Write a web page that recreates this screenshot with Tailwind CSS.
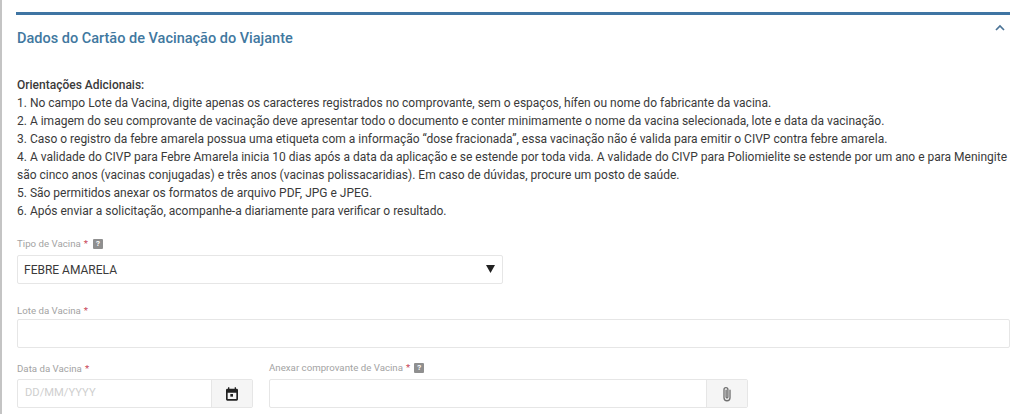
<!DOCTYPE html>
<html lang="en">
<head>
    <meta charset="UTF-8">
    <title>Dados do Cartão de Vacinação do Viajante</title>
    <script src="https://cdn.jsdelivr.net/npm/@tailwindcss/browser@4"></script>
</head>
<body class="bg-white h-[414px] overflow-hidden font-['Roboto',sans-serif] border-l-2 border-[#c4c4c4]">

    <div class="ml-[14px] w-[994px] pt-3">
        <!-- Section header -->
        <div class="border-t-[3px] border-[#3f75a3] flex justify-between h-[64px] pl-px">
            <h2 class="pt-[14px] text-[14.5px] leading-[20px] font-medium text-[#41789f]">Dados do Cartão de Vacinação do Viajante</h2>
            <svg class="mt-[7px] mr-[4px] w-[12px] h-[12px]" viewBox="0 0 12 12" fill="none" stroke="#4b7396" stroke-width="1.7"><path d="M2 8l4-4 4 4"/></svg>
        </div>

        <div class="pl-px">
            <!-- Instructions -->
            <div class="text-[12px] leading-[18px] text-[#3a3a3a]">
                <p class="font-medium">Orientações Adicionais:</p>
                <p>1. No campo Lote da Vacina, digite apenas os caracteres registrados no comprovante, sem o espaços, hífen ou nome do fabricante da vacina.</p>
                <p>2. A imagem do seu comprovante de vacinação deve apresentar todo o documento e conter minimamente o nome da vacina selecionada, lote e data da vacinação.</p>
                <p>3. Caso o registro da febre amarela possua uma etiqueta com a informação “dose fracionada”, essa vacinação não é valida para emitir o CIVP contra febre amarela.</p>
                <p>4. A validade do CIVP para Febre Amarela inicia 10 dias após a data da aplicação e se estende por toda vida. A validade do CIVP para Poliomielite se estende por um ano e para Meningite são cinco anos (vacinas conjugadas) e três anos (vacinas polissacaridias). Em caso de dúvidas, procure um posto de saúde.</p>
                <p>5. São permitidos anexar os formatos de arquivo PDF, JPG e JPEG.</p>
                <p>6. Após enviar a solicitação, acompanhe-a diariamente para verificar o resultado.</p>
            </div>

            <!-- Tipo de Vacina -->
            <div class="mt-[17px] w-[486px]">
                <div class="flex items-center h-[14px] text-[9.7px] text-[#a3a3a3]">
                    Tipo de Vacina <span class="text-[#c9485b] ml-[3px]">*</span>
                    <span class="ml-[5px] w-[10px] h-[10px] bg-[#8f8f8f] rounded-[1px] text-white text-[8px] leading-[10px] text-center font-bold">?</span>
                </div>
                <div class="mt-[4px] h-[29px] border border-[#e6e6e6] rounded-[2px] flex items-center justify-between pl-[6px] pr-[7px] text-[12px] text-[#3a3a3a]">
                    FEBRE AMARELA
                    <svg class="w-[9px] h-[8px] mb-[2px]" viewBox="0 0 9 8"><path d="M0 0h9L4.5 8z" fill="#222222"/></svg>
                </div>
            </div>

            <!-- Lote da Vacina -->
            <div class="mt-[20px]">
                <div class="flex items-center h-[14px] text-[9.7px] text-[#a3a3a3]">
                    Lote da Vacina <span class="text-[#c9485b] ml-[3px]">*</span>
                </div>
                <div class="mt-[1px] h-[29px] border border-[#e6e6e6] rounded-[2px]"></div>
            </div>

            <!-- Data + Anexo -->
            <div class="mt-[13px] flex gap-[16px]">
                <div class="w-[236px]">
                    <div class="flex items-center h-[14px] text-[9.7px] text-[#a3a3a3] mt-[1px]">
                        Data da Vacina <span class="text-[#c9485b] ml-[3px]">*</span>
                    </div>
                    <div class="mt-[3px] h-[29px] border border-[#e6e6e6] rounded-[2px] flex">
                        <div class="flex-1 pl-[7px] flex items-center text-[11.2px] text-[#cfcfcf]">DD/MM/YYYY</div>
                        <div class="w-[41px] bg-[#f5f5f5] border-l border-[#e6e6e6] flex items-center justify-center">
                            <svg class="w-[16px] h-[16px]" viewBox="0 0 24 24" fill="#222222"><path fill-rule="evenodd" d="M19 4h-1V2h-2v2H8V2H6v2H5a2 2 0 0 0-2 2v14a2 2 0 0 0 2 2h14a2 2 0 0 0 2-2V6a2 2 0 0 0-2-2zm-.5 15.5h-13V10h13z"/><path d="M9.5 12h4v4h-4z"/></svg>
                        </div>
                    </div>
                </div>
                <div class="w-[479px]">
                    <div class="flex items-center h-[14px] text-[9.7px] text-[#a3a3a3]">
                        Anexar comprovante de Vacina <span class="text-[#c9485b] ml-[3px]">*</span>
                        <span class="ml-[4px] w-[10px] h-[10px] bg-[#8f8f8f] rounded-[1px] text-white text-[8px] leading-[10px] text-center font-bold">?</span>
                    </div>
                    <div class="mt-[4px] h-[29px] border border-[#e6e6e6] rounded-[2px] flex">
                        <div class="flex-1"></div>
                        <div class="w-[41px] bg-[#f5f5f5] border-l border-[#e6e6e6] flex items-center justify-center">
                            <svg class="w-[18px] h-[18px]" viewBox="0 0 24 24" fill="none" stroke="#707070" stroke-width="1.8" stroke-linecap="round"><path d="M16 7v10a4 4 0 0 1-8 0V6a2.6 2.6 0 0 1 5.2 0v10a1.2 1.2 0 0 1-2.4 0V7"/></svg>
                        </div>
                    </div>
                </div>
            </div>
        </div>
    </div>

</body>
</html>
